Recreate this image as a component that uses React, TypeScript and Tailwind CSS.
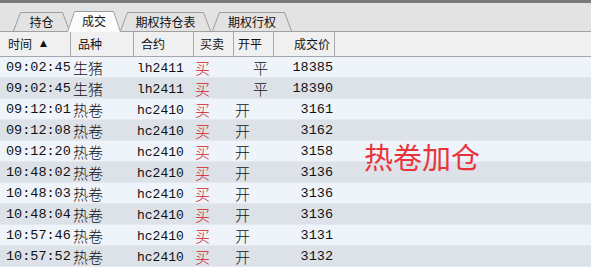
import React from "react";

const cjk = { fontFamily: '"Noto Sans CJK SC", "Noto Sans", sans-serif' };
const mono = { fontFamily: '"Liberation Mono", "Noto Sans CJK SC", monospace' };

type Trade = { time: string; name: string; code: string; side: string; oc: string; price: string };

const trades: Trade[] = [
    { time: "09:02:45", name: "生猪", code: "lh2411", side: "买", oc: "平", price: "18385" },
    { time: "09:02:45", name: "生猪", code: "lh2411", side: "买", oc: "平", price: "18390" },
    { time: "09:12:01", name: "热卷", code: "hc2410", side: "买", oc: "开", price: "3161" },
    { time: "09:12:08", name: "热卷", code: "hc2410", side: "买", oc: "开", price: "3162" },
    { time: "09:12:20", name: "热卷", code: "hc2410", side: "买", oc: "开", price: "3158" },
    { time: "10:48:02", name: "热卷", code: "hc2410", side: "买", oc: "开", price: "3136" },
    { time: "10:48:03", name: "热卷", code: "hc2410", side: "买", oc: "开", price: "3136" },
    { time: "10:48:04", name: "热卷", code: "hc2410", side: "买", oc: "开", price: "3136" },
    { time: "10:57:46", name: "热卷", code: "hc2410", side: "买", oc: "开", price: "3131" },
    { time: "10:57:52", name: "热卷", code: "hc2410", side: "买", oc: "开", price: "3132" },
];

// --- slanted tab, outline drawn as svg behind the label ---
const Tab: React.FC<{ label: string; w: number; active?: boolean; className?: string }> = ({ label, w, active, className }) => {
    const h = active ? 21 : 19;
    return (
        <div className={`relative flex items-center justify-center ${active ? "z-10 h-[21px] -mb-px" : "h-[19px]"} ${className ?? ""}`} style={{ width: w }}>
            <svg className="absolute inset-0" width={w} height={h} viewBox={`0 0 ${w} ${h}`}>
                <polygon points={`0,${h} 7,0.5 ${w - 7},0.5 ${w},${h}`} fill={active ? "#fbfbfb" : "#e3e3e3"} />
                <polyline points={`0.5,${h} 7.5,0.5 ${w - 7.5},0.5 ${w - 0.5},${h}`} fill="none" stroke="#9c9c9c" strokeWidth="1" />
            </svg>
            <span className={`relative text-[12px] leading-none text-[#111] ${active ? "mt-[-2px]" : ""}`} style={cjk}>{label}</span>
        </div>
    );
};

const cols = "grid grid-cols-[71px_63px_60px_40px_40px_61px_1fr]";

const App: React.FC = () => {
    return (
        <div className="relative w-[591px] h-[267px] overflow-hidden bg-[#eff4fb]">
            <div className="h-[3px] bg-[#7a7a7a]"></div>
            <div className="h-[29px] bg-[#e3e3e3] border-b border-[#a0a0a0] flex items-end pl-[13px]">
                <Tab label="持仓" w={57} />
                <Tab label="成交" w={54} active className="-ml-[3px]" />
                <Tab label="期权持仓表" w={91} className="-ml-px" />
                <Tab label="期权行权" w={80} className="ml-px" />
            </div>

            <div className={`${cols} h-[25px] bg-[#f0f0f0] border-b border-[#a4a8ae] text-[12px] text-[#111]`} style={cjk}>
                <div className="flex items-center pl-[8px] border-r border-[#a8a8a8]">
                    时间<span className="ml-[8px] text-[9px]" style={{ fontFamily: '"DejaVu Sans", sans-serif' }}>▲</span>
                </div>
                <div className="flex items-center pl-[7px] border-r border-[#a8a8a8]">品种</div>
                <div className="flex items-center pl-[7px] border-r border-[#a8a8a8]">合约</div>
                <div className="flex items-center pl-[6px] border-r border-[#a8a8a8]">买卖</div>
                <div className="flex items-center pl-[4px] border-r border-[#a8a8a8]">开平</div>
                <div className="flex items-center justify-end pr-[4px] border-r border-[#a8a8a8]">成交价</div>
                <div></div>
            </div>

            <div>
                {trades.map((t, i) => (
                    <div key={i} className={`${cols} h-[21px] border-b border-[#e4e9f0] text-[#111] ${i % 2 === 0 ? "bg-[#eff4fb]" : "bg-[#dde2e9]"}`}>
                        <div className="flex items-center pl-[6px] text-[13.5px] whitespace-nowrap" style={mono}>{t.time}</div>
                        <div className="flex items-center pl-[2px] text-[15px] font-light" style={cjk}>{t.name}</div>
                        <div className="flex items-center pl-[3px] text-[13px]" style={mono}>{t.code}</div>
                        <div className="flex items-center pl-[1px] text-[15px] font-light text-[#d01818]" style={cjk}>{t.side}</div>
                        <div className={`flex items-center text-[15px] font-light ${t.oc === "平" ? "pl-[19px]" : "pl-[1px]"}`} style={cjk}>{t.oc}</div>
                        <div className="flex items-center justify-end pr-[2px] text-[13.5px]" style={mono}>{t.price}</div>
                        <div></div>
                    </div>
                ))}
            </div>

            <div className="absolute left-[364px] top-[141px] text-[29px] leading-[30px] text-[#e8353b]" style={cjk}>热卷加仓</div>
        </div>
    );
};

export default App;
